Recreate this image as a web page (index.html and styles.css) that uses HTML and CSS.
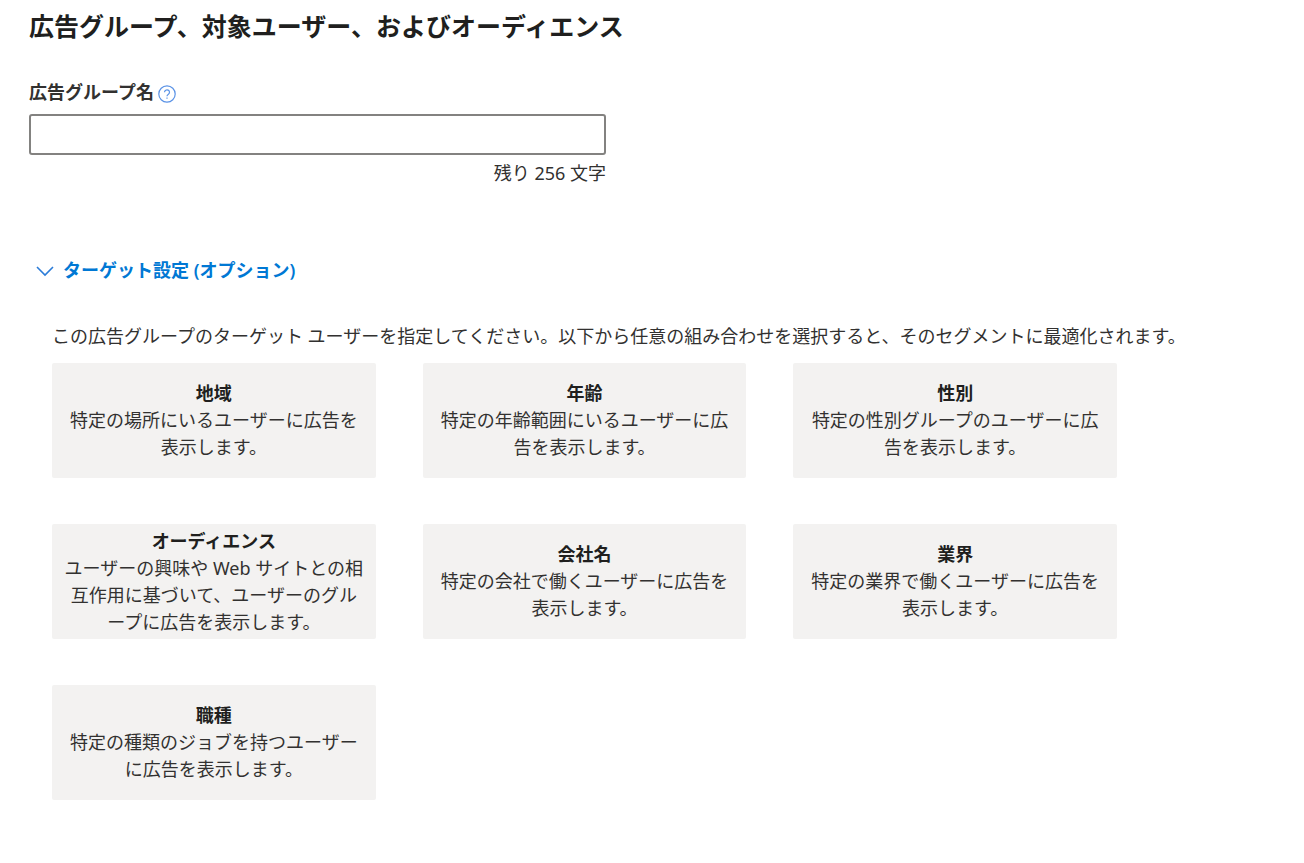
FILE: index.html
```html
<!DOCTYPE html>
<html lang="ja">
<head>
<meta charset="utf-8">
<meta name="viewport" content="width=device-width, initial-scale=1">
<title>広告グループ、対象ユーザー、およびオーディエンス</title>
<link rel="stylesheet" href="styles.css">
</head>
<body>
<main class="page">
  <h1 class="page-title">広告グループ、対象ユーザー、およびオーディエンス</h1>

  <div class="field">
    <div class="field-head">
      <label class="field-label" for="group-name">広告グループ名</label>
      <button class="help" type="button" aria-label="ヘルプ">
        <svg class="help-icon" viewBox="0 0 18 18" aria-hidden="true">
          <circle cx="9" cy="9" r="8.2"/>
          <path d="M6.5 7.2a2.5 2.4 0 1 1 3.9 2c-.9.6-1.4 1-1.4 2"/>
          <path d="M9 12.4v1.4"/>
        </svg>
      </button>
    </div>
    <input class="field-input" id="group-name" type="text" maxlength="256" aria-describedby="group-name-count">
    <p class="field-count" id="group-name-count">残り 256 文字</p>
  </div>

  <section class="targeting">
    <button class="toggle" type="button" aria-expanded="true" aria-controls="targeting-body">
      <svg class="toggle-icon" viewBox="0 0 18 18" aria-hidden="true"><path d="M1 5l8 8 8-8"/></svg>
      <span>ターゲット設定 (オプション)</span>
    </button>
    <div class="targeting-body" id="targeting-body">
      <p class="intro">この広告グループのターゲット ユーザーを指定してください。以下から任意の組み合わせを選択すると、そのセグメントに最適化されます。</p>
      <div class="cards">
        <button class="card" type="button"><strong>地域</strong><span>特定の場所にいるユーザーに広告を表示します。</span></button>
        <button class="card" type="button"><strong>年齢</strong><span>特定の年齢範囲にいるユーザーに広告を表示します。</span></button>
        <button class="card" type="button"><strong>性別</strong><span>特定の性別グループのユーザーに広告を表示します。</span></button>
        <button class="card" type="button"><strong>オーディエンス</strong><span>ユーザーの興味や Web サイトとの相互作用に基づいて、ユーザーのグループに広告を表示します。</span></button>
        <button class="card" type="button"><strong>会社名</strong><span>特定の会社で働くユーザーに広告を表示します。</span></button>
        <button class="card" type="button"><strong>業界</strong><span>特定の業界で働くユーザーに広告を表示します。</span></button>
        <button class="card" type="button"><strong>職種</strong><span>特定の種類のジョブを持つユーザーに広告を表示します。</span></button>
      </div>
    </div>
  </section>
</main>
</body>
</html>
```
FILE: styles.css
```css
* {
  box-sizing: border-box;
}

body {
  margin: 0;
  background: #fff;
  color: #323130;
  font-family: "Noto Sans", "Noto Sans CJK JP", sans-serif;
  font-size: 18px;
  line-height: 27px;
}

button {
  padding: 0;
  border: 0;
  background: none;
  color: inherit;
  font: inherit;
  cursor: pointer;
}

h1,
p {
  margin: 0;
}

.page {
  padding: 8px 29px 48px;
}

.page-title {
  color: #201f1e;
  font-size: 25px;
  font-weight: 700;
  line-height: 36px;
}

.field {
  max-width: 577px;
  margin-top: 35px;
}

.field-head {
  display: flex;
  align-items: center;
  gap: 4px;
}

.field-label {
  font-weight: 600;
}

.help {
  display: flex;
  padding-top: 2px;
}

.help-icon {
  width: 18px;
  height: 18px;
  fill: none;
  stroke: #5b93e6;
  stroke-width: 1.2;
}

.field-input {
  display: block;
  width: 100%;
  height: 41px;
  margin-top: 8px;
  padding: 0 12px;
  border: 2px solid #838280;
  border-radius: 3px;
  background: #fff;
  color: inherit;
  font: inherit;
}

.field-count {
  margin-top: 5px;
  text-align: right;
}

.targeting {
  margin-top: 70px;
}

.toggle {
  display: flex;
  align-items: center;
  gap: 9px;
  margin-left: 7px;
  color: #0078d4;
  font-weight: 600;
}

.toggle-icon {
  width: 18px;
  height: 18px;
  fill: none;
  stroke: #2b7cd8;
  stroke-width: 1.6;
}

.targeting-body {
  padding: 39px 23px 0;
}

.intro {
  margin-bottom: 13px;
}

.cards {
  display: grid;
  grid-template-columns: repeat(3, 1fr);
  gap: 46px 47px;
  max-width: 1065px;
}

.card {
  display: flex;
  flex-direction: column;
  align-items: center;
  justify-content: center;
  min-height: 115px;
  padding: 3px 12px;
  border-radius: 2px;
  background: #f3f2f1;
  text-align: center;
}

.card strong {
  color: #201f1e;
  font-weight: 700;
}
```
